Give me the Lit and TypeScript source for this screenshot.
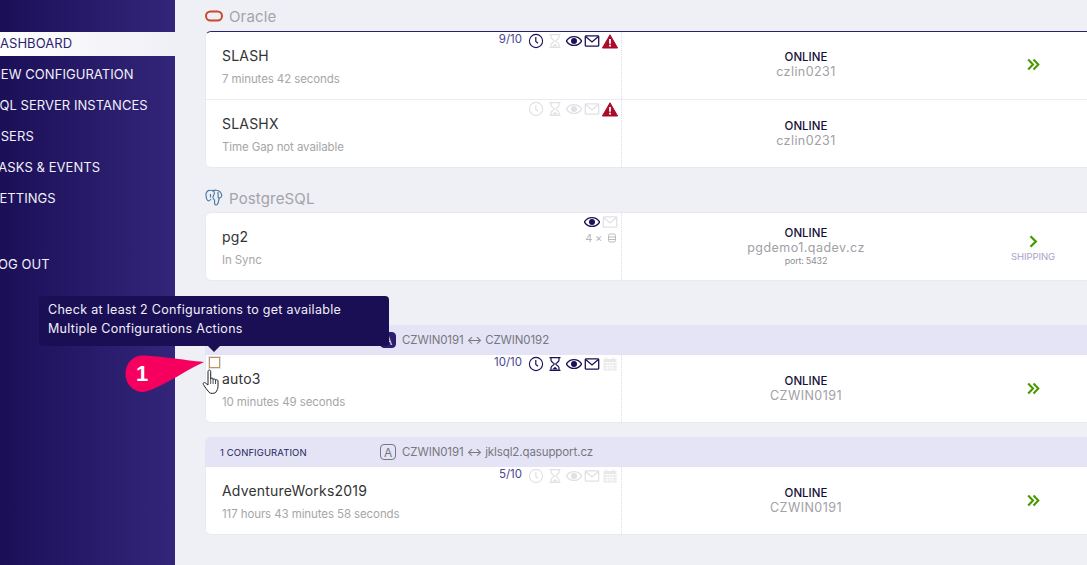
import { LitElement, html, css, svg } from "lit";
import { customElement } from "lit/decorators.js";

const DARK = "#1b1055";
const DIM = "#e1e1e4";

const clock = (c: string) => svg`<svg class="ic sp" width="16" height="16" viewBox="0 0 16 16" fill="none" stroke=${c}><circle cx="8" cy="8" r="6.600" stroke-width="1.100"/><path d="M7.800 4v4.400l2.200 1.800" stroke-width="1.200"/></svg>`;
const hourglass = (c: string) => svg`<svg class="ic sp" width="16" height="16" viewBox="0 0 16 16" fill="none" stroke=${c} stroke-width="1.200"><path d="M2.500 1.600h11M2.500 14.400h11"/><path d="M4 2v2.200C4 6 7.300 7 7.300 8S4 10 4 11.800V14M12 2v2.200C12 6 8.700 7 8.700 8s3.300 2 3.300 3.800V14"/><path d="M5 13.500L8 10.800l3 2.700z" fill=${c} stroke="none"/></svg>`;
const eye = (c: string) => svg`<svg class="ic" width="16" height="16" viewBox="0 0 16 16"><path d="M.4 8C2.300 5 5 3.600 8 3.600S13.700 5 15.600 8C13.700 11 11 12.400 8 12.400S2.300 11 .4 8z" fill="none" stroke=${c} stroke-width="1.400"/><circle cx="8" cy="8" r="3" fill=${c}/></svg>`;
const mail = (c: string) => svg`<svg class="ic" width="16" height="16" viewBox="0 0 16 16" fill="none" stroke=${c} stroke-width="1.300"><rect x="1.300" y="2.800" width="13.400" height="10.400" rx=".8"/><path d="M1.600 3.600L8 9l6.400-5.400"/></svg>`;
const warn = () => svg`<svg class="ic" width="16" height="16" viewBox="0 0 16 16"><path d="M8 1.800L15.600 15H.4z" fill="#ad0b2a" stroke="#ad0b2a" stroke-linejoin="round"/><rect x="7.100" y="6" width="1.800" height="4.700" fill="#fff"/><rect x="7.100" y="11.700" width="1.800" height="1.800" fill="#fff"/></svg>`;
const cal = () => svg`<svg class="ic" width="16" height="16" viewBox="0 0 16 16"><path d="M1.500 3h13v11.500h-13z" fill="#e8e8ea"/><path d="M4.500 1.500v2M11.500 1.500v2" stroke="#e8e8ea" stroke-width="1.500"/><path d="M2 6.500h12M2 9.300h12M2 12h12M5.200 6v8M8 6v8M10.800 6v8" stroke="#fff" stroke-width=".8"/></svg>`;
const dbIcon = () => svg`<svg width="8" height="10" viewBox="0 0 8 10" fill="none" stroke="#b5b5b5" stroke-width=".9"><rect x=".5" y="1" width="7" height="8" rx="1.500"/><path d="M.5 4h7M.5 6.500h7"/></svg>`;
const dbl = () => svg`<svg width="13" height="13" viewBox="0 0 13 13" fill="none" stroke="#479a00" stroke-width="2.100"><path d="M1.200 1.500L6 6.500 1.200 11.500M6.500 1.500L11.300 6.500 6.500 11.500"/></svg>`;
const single = () => svg`<svg width="9" height="13" viewBox="0 0 9 13" fill="none" stroke="#479a00" stroke-width="2.300"><path d="M1.500 1.300L6.800 6.500 1.500 11.700"/></svg>`;

const oracleLogo = svg`<svg width="18" height="12" viewBox="0 0 18 12"><rect x="1" y="1.500" width="16" height="9" rx="4.500" fill="none" stroke="#c9492f" stroke-width="2"/></svg>`;
const pgLogo = svg`<svg width="18" height="18" viewBox="0 0 18 18" fill="none" stroke="#4f7ca3" stroke-width="1.200" stroke-linejoin="round"><path d="M5.500 1.500C2.600 1.200.8 3 1 6c.2 2.600 1 5.600 2.400 5.900 1 .2 2-1 2.700-1.900"/><path d="M7.500 2C9.500.8 13 .9 15 2.800c1.800 1.900 2 3.700 1.300 5-.6 1-1.500 1.200-2.200 1.400-.3 2-.5 4.800-1.800 6.200-.9 1-2.100.7-2.500-.4-.4-1.200-.2-3-.3-4.800"/><path d="M5.500 1.500c2-.4 3.600.5 3.900 2.200.3 1.400-.8 2.500-1.200 3.500-.4 1.200-.2 2.500.6 3.300"/><path d="M5.500 5v3.500M12.800 3c.5 1.600.4 3.400.3 5 0 .5.400 1 1.100 1.100"/></svg>`;

type Row = {
  name: string; sub: string; host: string; port?: string; count?: string;
  icons: unknown[]; shipping?: boolean;
};

const oracle: Row[] = [
  { name: "SLASH", sub: "7 minutes 42 seconds", host: "czlin0231", count: "9/10", icons: [clock(DARK), hourglass(DIM), eye(DARK), mail(DARK), warn()] },
  { name: "SLASHX", sub: "Time Gap not available", host: "czlin0231", icons: [clock(DIM), hourglass(DIM), eye(DIM), mail(DIM), warn()] },
];
const nav = ["DASHBOARD", "NEW CONFIGURATION", "SQL SERVER INSTANCES", "USERS", "TASKS & EVENTS", "SETTINGS"];

@customElement("app-root")
export class AppRoot extends LitElement {
  static styles = css`
    :host { display: block; width: 1087px; height: 565px; overflow: hidden; position: relative;
      font-family: "Inter", "Liberation Sans", sans-serif; letter-spacing: -0.25px; background: #efeff6; }
    .page { display: grid; grid-template-columns: 175px 1fr; height: 565px; }
    .side { background: linear-gradient(90deg, #1b0f58 0%, #33267a 100%); padding-top: 32px; overflow: hidden; }
    .nav { display: flex; flex-direction: column; gap: 7px; margin-left: -9px; }
    .nav a { height: 24px; line-height: 22px; font-size: 13px; color: #f1f0f8; white-space: nowrap; letter-spacing: 0.05px; }
    .nav a.active { background: linear-gradient(90deg, #fff, #efeff6); color: #2b1f70; }
    .nav a.logout { margin-top: 35px; }
    .main { padding-left: 30px; overflow: hidden; min-width: 0; }
    .head { display: flex; align-items: center; gap: 6px; font-size: 15px; letter-spacing: 0.15px; color: #a3a3a8; }
    .head.o { height: 22px; margin-top: 5px; margin-bottom: 4px; }
    .head.p { height: 20px; margin-top: 20px; margin-bottom: 4px; }
    .card { width: 900px; background: #fff; border-radius: 6px 0 0 6px; border: 1px solid #e9e9f3; box-sizing: border-box; }
    .card.top { border-top: 1px solid #2b1f70; }
    .row { display: grid; grid-template-columns: 416px 1fr; height: 67px; }
    .row + .row { border-top: 1px solid #ebebf4; }
    .top .row:first-child .right { padding-bottom: 2px; }
    .left { position: relative; padding: 16px 0 0 16px; border-right: 1px dotted #dcdcec; }
    .name { font-size: 14px; color: #333; line-height: 16px; letter-spacing: 0.2px; }
    .sub { font-size: 11.500px; color: #a6a6a6; margin-top: 8px; line-height: 14px; letter-spacing: -0.1px; }
    .meta { position: absolute; right: 3px; top: 1px; display: flex; gap: 2px; align-items: flex-start; }
    .count { font-size: 11.500px; color: #4c4590; margin-right: 4px; line-height: 12px; letter-spacing: 0; }
    .ic { display: block; }
    .sp { margin-right: 1px; }
    .pgmeta { position: absolute; right: 3px; top: 1px; display: flex; flex-direction: column; align-items: flex-end; }
    .pgicons { display: flex; gap: 2px; }
    .times { display: flex; gap: 6px; align-items: center; font-size: 11px; color: #b5b5b5; margin-right: 2px; margin-top: 1px; }
    .right { display: grid; grid-template-columns: 368px 86px; align-items: center; }
    .status { text-align: center; display: flex; flex-direction: column; align-items: center; }
    .online { font-size: 11.500px; color: #15103a; line-height: 13px; font-weight: 500; letter-spacing: 0; }
    .host { font-size: 12.500px; color: #a0a0a6; line-height: 15px; letter-spacing: 0.45px; }
    .port { font-size: 9px; color: #8f8f95; line-height: 12px; }
    .act { display: flex; flex-direction: column; align-items: center; justify-content: center; gap: 3px; }
    .act.ps { padding-top: 3px; }
    .ship { font-size: 9.500px; color: #a7a3c9; letter-spacing: -0.05px; }
    .band { width: 900px; height: 30px; background: #e4e4f6; display: grid; grid-template-columns: 160px 1fr; align-items: center; padding-left: 15px; box-sizing: border-box; font-size: 9.500px; letter-spacing: 0.1px; color: #29255a; border-radius: 6px 0 0 0; }
    .pair { display: flex; align-items: center; gap: 5px; font-size: 11.500px; color: #77777f; letter-spacing: -0.1px; }
    .a { width: 16px; height: 16px; box-sizing: border-box; border: 1px solid #77777f; border-radius: 4px; display: flex; align-items: center; justify-content: center; font-size: 12px; margin-right: 1px; }
    .a.fill { background: #2b1f70; border-color: #2b1f70; color: #e3e3f5; }
    .g3 { margin-top: 44px; }
    .g4 { margin-top: 14px; }
    .g3 .card, .g4 .card { border-top: 0; border-radius: 0 0 0 6px; }
    .tip { position: absolute; left: 39px; top: 296px; width: 350px; height: 50px; box-sizing: border-box; background: #1a0f55; color: #f1f0f8; border-radius: 4px; padding: 4px 9px; font-size: 12.500px; line-height: 19px; letter-spacing: 0.3px; }
    .tip::after { content: ""; position: absolute; left: 169px; top: 50px; border: 6px solid transparent; border-top-color: #1a0f55; border-bottom: 0; }
    .check { position: absolute; left: 209px; top: 357px; width: 11px; height: 11px; box-sizing: border-box; border: 1px solid #c98f55; box-shadow: 0 0 0 1px rgba(130,165,210,.3); background: #fff; }
    .callout { position: absolute; left: 124px; top: 354px; }
    .num { position: absolute; left: 125px; top: 363px; width: 34px; text-align: center; color: #fff; font-size: 22px; line-height: 22px; font-weight: 700; font-family: "Liberation Sans", sans-serif; letter-spacing: 0; }
    .hand { position: absolute; left: 202px; top: 369px; }
  `;

  private row(r: Row, m: unknown = null) {
    const meta = html`<div class="meta">${r.count ? html`<span class="count">${r.count}</span>` : ""}${r.icons}</div>`;
    return html`<div class="row">
      <div class="left">
        <div class="name">${r.name}</div>
        <div class="sub">${r.sub}</div>
        ${m ?? meta}
      </div>
      <div class="right">
        <div class="status">
          <div class="online">ONLINE</div>
          <div class="host">${r.host}</div>
          ${r.port ? html`<div class="port">${r.port}</div>` : ""}
        </div>
        ${r.shipping
          ? html`<div class="act ps">${single()}<span class="ship">SHIPPING</span></div>`
          : r.name === "SLASHX" ? html`<div></div>` : html`<div class="act">${dbl()}</div>`}
      </div>
    </div>`;
  }

  render() {
    return html`<div class="page">
      <aside class="side"><nav class="nav">
        ${nav.map((n, i) => html`<a class=${i === 0 ? "active" : ""}>${n}</a>`)}
        <a class="logout">LOG OUT</a>
      </nav></aside>
      <main class="main">
        <div class="head o">${oracleLogo}<span>Oracle</span></div>
        <div class="card top">${oracle.map((r) => this.row(r))}</div>
        <div class="head p">${pgLogo}<span>PostgreSQL</span></div>
        <div class="card">
          ${this.row(
            { name: "pg2", sub: "In Sync", host: "pgdemo1.qadev.cz", port: "port: 5432", icons: [], shipping: true },
            html`<div class="pgmeta"><div class="pgicons">${eye(DARK)}${mail(DIM)}</div><div class="times">4 × ${dbIcon()}</div></div>`
          )}
        </div>
        <div class="g3">
          <div class="band"><span>1 CONFIGURATION</span><div class="pair"><span class="a fill">A</span>CZWIN0191 ↔ CZWIN0192</div></div>
          <div class="card">${this.row({ name: "auto3", sub: "10 minutes 49 seconds", host: "CZWIN0191", count: "10/10", icons: [clock(DARK), hourglass(DARK), eye(DARK), mail(DARK), cal()] })}</div>
        </div>
        <div class="g4">
          <div class="band"><span>1 CONFIGURATION</span><div class="pair"><span class="a">A</span>CZWIN0191 ↔ jklsql2.qasupport.cz</div></div>
          <div class="card">${this.row({ name: "AdventureWorks2019", sub: "117 hours 43 minutes 58 seconds", host: "CZWIN0191", count: "5/10", icons: [clock(DIM), hourglass(DIM), eye(DIM), mail(DIM), cal()] })}</div>
        </div>
      </main>
    </div>
    <div class="tip">Check at least 2 Configurations to get available<br />Multiple Configurations Actions</div>
    <div class="check"></div>
    <svg class="callout" width="84" height="42" viewBox="0 0 84 42"><path d="M19 1.500C30 1.500 60 6 80 8 62 16 34 36 19 38 9 38 1.500 30 1.500 20 1.500 9 9 1.500 19 1.500z" fill="#f5005f"/></svg>
    <div class="num">1</div>
    <svg class="hand" width="19" height="25" viewBox="0 0 19 25"><path d="M6 2.500c0-2 2.700-2 2.700 0v7.500c0-1.300 2.400-1.300 2.400 0v.8c0-1.200 2.400-1.200 2.400 0v.8c0-1.100 2.500-1.100 2.500.2v5.500c0 2.800-1.200 4.200-2.300 6.200-2 1.200-5 1.200-6.500 0C5 20.500 3 18.500 1.400 15.500c-.8-1.600.9-2.600 2-1.500L6 16z" fill="#fff" stroke="#222" stroke-width="1"/><path d="M8.700 10v5M11.100 10.800v4.200M13.500 11.600v3.400" stroke="#222" stroke-width=".8" fill="none"/></svg>`;
  }
}
